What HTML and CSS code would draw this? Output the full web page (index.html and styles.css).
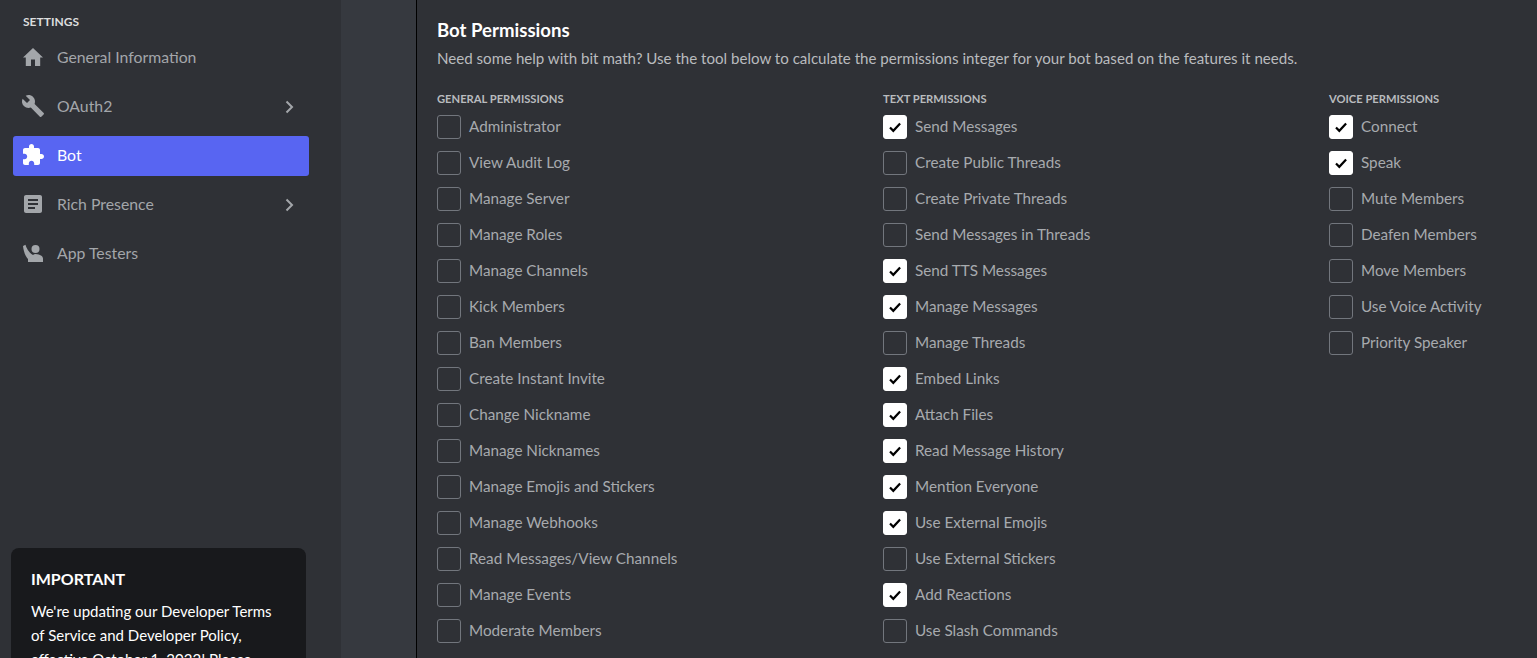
FILE: index.html
```html
<!DOCTYPE html>
<html lang="en">
<head>
<meta charset="utf-8">
<title>Bot Permissions</title>
<link rel="stylesheet" href="styles.css">
</head>
<body>
<svg class="defs" aria-hidden="true">
  <symbol id="check" viewBox="0 0 22 22"><path d="M6 11.500l3.300 3.300 6.800-7.300" fill="none" stroke="#000" stroke-width="2.200"/></symbol>
  <symbol id="chev" viewBox="0 0 24 24"><path d="M9.500 6.500L15 12l-5.500 5.500" fill="none" stroke="currentColor" stroke-width="2"/></symbol>
</svg>
<div class="page">
  <aside class="sidebar">
    <h2 class="side-title">SETTINGS</h2>
    <nav class="nav">
      <a class="nav-item"><svg class="nav-icon" viewBox="0 0 24 24"><path d="M10 21v-6.500h4V21h5.200v-8.500H22L12 3 2 12.500h2.800V21z"/></svg><span class="nav-label">General Information</span></a>
      <a class="nav-item"><svg class="nav-icon" viewBox="0 0 24 24"><path d="M22.700 19l-9.100-9.100c.9-2.300.4-5-1.500-6.900-2-2-5-2.400-7.400-1.300L9 6 6 9 1.600 4.700C.4 7.100.9 10.100 2.900 12.100c1.900 1.900 4.600 2.400 6.900 1.500l9.100 9.100c.4.4 1 .4 1.400 0l2.300-2.300c.5-.4.5-1.100.1-1.400z"/></svg><span class="nav-label">OAuth2</span><svg class="nav-chev"><use href="#chev"/></svg></a>
      <a class="nav-item active"><svg class="nav-icon" viewBox="0 0 24 24"><path d="M20.500 11H19V7c0-1.100-.9-2-2-2h-4V3.500C13 2.120 11.880 1 10.500 1S8 2.120 8 3.500V5H4c-1.100 0-1.990.9-1.990 2v3.800H3.500c1.490 0 2.700 1.210 2.700 2.700s-1.210 2.700-2.700 2.700H2V20c0 1.100.9 2 2 2h3.800v-1.500c0-1.490 1.210-2.700 2.700-2.700 1.490 0 2.700 1.210 2.700 2.700V22H17c1.100 0 2-.9 2-2v-4h1.500c1.380 0 2.500-1.120 2.500-2.500S21.880 11 20.500 11z"/></svg><span class="nav-label">Bot</span></a>
      <a class="nav-item"><svg class="nav-icon" viewBox="0 0 24 24"><path d="M19 3H5c-1.100 0-2 .9-2 2v14c0 1.100.9 2 2 2h14c1.100 0 2-.9 2-2V5c0-1.100-.9-2-2-2zm-5 14H7v-2h7v2zm3-4H7v-2h10v2zm0-4H7V7h10v2z"/></svg><span class="nav-label">Rich Presence</span><svg class="nav-chev"><use href="#chev"/></svg></a>
      <a class="nav-item"><svg class="nav-icon" viewBox="0 0 24 24"><circle cx="14.500" cy="8" r="4"/><path d="M2 5l2.500-1.200C5.300 6.600 7.500 11.400 12 14c.8-.6 1.500-1 2.500-1 3.200 0 7.500 1.600 7.500 4.500V21H7v-3C4.300 15.500 2.400 9.500 2 5z"/></svg><span class="nav-label">App Testers</span></a>
    </nav>
    <section class="notice">
      <h3 class="notice-title">IMPORTANT</h3>
      <p class="notice-text">We're updating our Developer Terms of Service and Developer Policy, effective October 1, 2022! Please review the changes.</p>
    </section>
  </aside>
  <div class="gutter"></div>
  <main class="main">
    <h1 class="title">Bot Permissions</h1>
    <p class="desc">Need some help with bit math? Use the tool below to calculate the permissions integer for your bot based on the features it needs.</p>
    <div class="columns">
      <div class="col">
        <h4 class="col-title">GENERAL PERMISSIONS</h4>
        <label class="perm"><span class="box"></span>Administrator</label>
        <label class="perm"><span class="box"></span>View Audit Log</label>
        <label class="perm"><span class="box"></span>Manage Server</label>
        <label class="perm"><span class="box"></span>Manage Roles</label>
        <label class="perm"><span class="box"></span>Manage Channels</label>
        <label class="perm"><span class="box"></span>Kick Members</label>
        <label class="perm"><span class="box"></span>Ban Members</label>
        <label class="perm"><span class="box"></span>Create Instant Invite</label>
        <label class="perm"><span class="box"></span>Change Nickname</label>
        <label class="perm"><span class="box"></span>Manage Nicknames</label>
        <label class="perm"><span class="box"></span>Manage Emojis and Stickers</label>
        <label class="perm"><span class="box"></span>Manage Webhooks</label>
        <label class="perm"><span class="box"></span>Read Messages/View Channels</label>
        <label class="perm"><span class="box"></span>Manage Events</label>
        <label class="perm"><span class="box"></span>Moderate Members</label>
      </div>
      <div class="col">
        <h4 class="col-title">TEXT PERMISSIONS</h4>
        <label class="perm"><span class="box on"><svg class="tick"><use href="#check"/></svg></span>Send Messages</label>
        <label class="perm"><span class="box"></span>Create Public Threads</label>
        <label class="perm"><span class="box"></span>Create Private Threads</label>
        <label class="perm"><span class="box"></span>Send Messages in Threads</label>
        <label class="perm"><span class="box on"><svg class="tick"><use href="#check"/></svg></span>Send TTS Messages</label>
        <label class="perm"><span class="box on"><svg class="tick"><use href="#check"/></svg></span>Manage Messages</label>
        <label class="perm"><span class="box"></span>Manage Threads</label>
        <label class="perm"><span class="box on"><svg class="tick"><use href="#check"/></svg></span>Embed Links</label>
        <label class="perm"><span class="box on"><svg class="tick"><use href="#check"/></svg></span>Attach Files</label>
        <label class="perm"><span class="box on"><svg class="tick"><use href="#check"/></svg></span>Read Message History</label>
        <label class="perm"><span class="box on"><svg class="tick"><use href="#check"/></svg></span>Mention Everyone</label>
        <label class="perm"><span class="box on"><svg class="tick"><use href="#check"/></svg></span>Use External Emojis</label>
        <label class="perm"><span class="box"></span>Use External Stickers</label>
        <label class="perm"><span class="box on"><svg class="tick"><use href="#check"/></svg></span>Add Reactions</label>
        <label class="perm"><span class="box"></span>Use Slash Commands</label>
      </div>
      <div class="col">
        <h4 class="col-title">VOICE PERMISSIONS</h4>
        <label class="perm"><span class="box on"><svg class="tick"><use href="#check"/></svg></span>Connect</label>
        <label class="perm"><span class="box on"><svg class="tick"><use href="#check"/></svg></span>Speak</label>
        <label class="perm"><span class="box"></span>Mute Members</label>
        <label class="perm"><span class="box"></span>Deafen Members</label>
        <label class="perm"><span class="box"></span>Move Members</label>
        <label class="perm"><span class="box"></span>Use Voice Activity</label>
        <label class="perm"><span class="box"></span>Priority Speaker</label>
      </div>
    </div>
  </main>
</div>
</body>
</html>
```
FILE: styles.css
```css
* { box-sizing: border-box; }
html, body { margin: 0; height: 100%; overflow: hidden; }
body { background: #2f3136; font-family: Lato, "Open Sans", sans-serif; }
.defs { display: none; }
.page { display: flex; height: 658px; overflow: hidden; }

.sidebar { width: 341px; flex: none; background: #2f3136; padding: 0 32px 0 13px; overflow: hidden; }
.side-title { margin: 15px 0 0 10px; font-size: 12px; line-height: 14px; font-weight: 700; color: #dcddde; }
.nav { margin-top: 9px; display: flex; flex-direction: column; gap: 9px; }
.nav-item { height: 40px; display: flex; align-items: center; padding: 0 8px; border-radius: 3px; color: #a3a6aa; font-size: 15.800px; }
.nav-item.active { background: #5865f2; color: #fff; }
.nav-icon { width: 24px; height: 24px; fill: currentColor; flex: none; margin-bottom: 2px; }
.nav-label { margin: 0 0 4px 12px; flex: 1; }
.nav-chev { width: 24px; height: 24px; flex: none; }

.notice { margin: 274px 3px 0 -2px; padding: 20px; background: #18191c; border-radius: 8px; color: #fff; }
.notice-title { margin: -1px 0 0; font-size: 16px; line-height: 24px; font-weight: 700; }
.notice-text { margin: 8px 0 0; font-size: 15px; line-height: 24px; color: #fff; }

.gutter { width: 76px; flex: none; background: #36393f; border-right: 1px solid #000; }

.main { flex: 1; min-width: 0; padding: 0 20px; background: #2f3136; }
.title { margin: 18px 0 0; font-size: 18.600px; line-height: 24px; font-weight: 700; color: #fff; }
.desc { margin: 6px 0 0; font-size: 15.100px; line-height: 20px; color: #b9bbbe; }
.columns { display: grid; grid-template-columns: 446px 446px 1fr; margin-top: 23px; }
.col-title { margin: 0 0 1px; font-size: 11.200px; line-height: 16px; font-weight: 700; color: #b9bbbe; }
.perm { display: flex; align-items: center; gap: 8px; height: 36px; padding: 6px 0; font-size: 15.250px; color: #a7aaae; }
.box { width: 24px; height: 24px; flex: none; margin-top: 2px; border: 1px solid #72767d; border-radius: 3px; display: flex; }
.box.on { background: #fff; border-color: #fff; }
.tick { width: 22px; height: 22px; }
```
